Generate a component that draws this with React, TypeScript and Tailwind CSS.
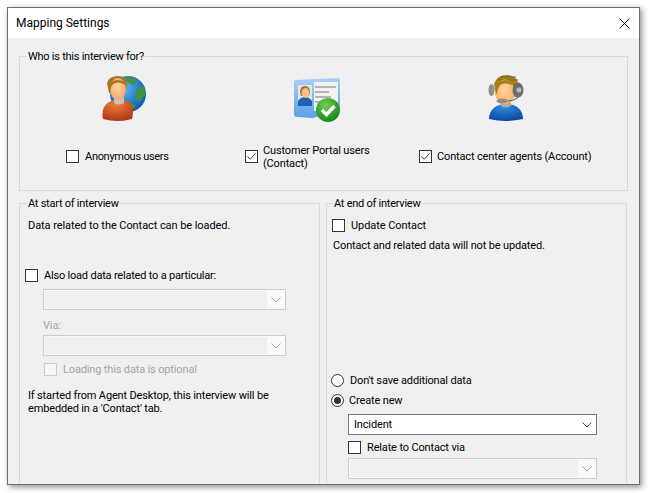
const font = "font-['Roboto','Noto_Sans',sans-serif]";

function CheckBox({ checked, disabled }: { checked?: boolean; disabled?: boolean }) {
  return (
    <span
      className={
        disabled
          ? "flex h-[13px] w-[13px] shrink-0 border border-[#cccccc] bg-[#f7f7f7]"
          : "flex h-[13px] w-[13px] shrink-0 border border-[#333333] bg-white"
      }
    >
      {checked && (
        <svg viewBox="0 0 11 11" className="h-[11px] w-[11px]">
          <path d="M1.5 5.5 L4.2 8.3 L9.6 2.2" fill="none" stroke="#444" strokeWidth="1" />
        </svg>
      )}
    </span>
  );
}

function Radio({ checked }: { checked?: boolean }) {
  return (
    <span className="flex h-[13px] w-[13px] shrink-0 items-center justify-center rounded-full border border-[#333333] bg-white">
      {checked && <span className="h-[7px] w-[7px] rounded-full bg-[#333333]" />}
    </span>
  );
}

function Chevron({ color }: { color: string }) {
  return (
    <svg viewBox="0 0 10 6" className="h-[6px] w-[10px]">
      <path d="M0.5 0.5 L5 5 L9.5 0.5" fill="none" stroke={color} strokeWidth="1" />
    </svg>
  );
}

function DisabledSelect() {
  return (
    <div className="flex h-[21px] border border-[#cccccc] bg-[#f9f9f9] py-[1px] pl-[1px]">
      <div className="flex-1 bg-[#f0f0f0]" />
      <div className="flex w-[18px] items-center justify-center">
        <Chevron color="#a6a6a6" />
      </div>
    </div>
  );
}

function GroupBox({
  title,
  className,
  legendLeft = "left-[7px]",
  children,
}: {
  title: string;
  className: string;
  legendLeft?: string;
  children: React.ReactNode;
}) {
  return (
    <div className={"relative border border-[#d9d9d9] " + className}>
      <span className={"absolute top-[-8px] bg-[#f0f0f0] px-[1px] leading-[16px] tracking-[-0.25px] " + legendLeft}>{title}</span>
      {children}
    </div>
  );
}

function PersonGlobe() {
  return (
    <svg viewBox="0 0 46 46" className="h-[46px] w-[46px]">
      <defs>
        <radialGradient id="globe" cx="0.4" cy="0.35" r="0.75">
          <stop offset="0" stopColor="#5fb2ea" />
          <stop offset="0.7" stopColor="#1a6fc4" />
          <stop offset="1" stopColor="#0f4f98" />
        </radialGradient>
        <radialGradient id="shirt" cx="0.45" cy="0.2" r="0.9">
          <stop offset="0" stopColor="#ea7f3a" />
          <stop offset="1" stopColor="#a92d12" />
        </radialGradient>
        <radialGradient id="face" cx="0.45" cy="0.4" r="0.7">
          <stop offset="0" stopColor="#ffd3a1" />
          <stop offset="1" stopColor="#f6a05c" />
        </radialGradient>
      </defs>
      <circle cx="27" cy="19" r="18" fill="url(#globe)" />
      <path d="M24 2 Q32 1 36 6 L33 10 L26 7 Z M36 14 L43 11 L44 20 L38 27 L34 22 Z M30 28 L35 30 L31 35 Z" fill="#3f9440" />
      <path d="M2 44 C-1 30 9 25 16 25 H22 C30 25 34 31 31 44 Q17 48 2 44 Z" fill="url(#shirt)" />
      <path d="M13 22 H23 V28 Q18 31 13 28 Z" fill="#c9c1b8" />
      <path d="M6 8 Q8 1 17 1 Q26 1 26 10 L25 16 L8 18 Z" fill="#a9761f" />
      <ellipse cx="17" cy="14" rx="8" ry="11" fill="url(#face)" />
      <path d="M8 12 Q9 5 17 5 Q24 5 26 11 Q20 6 14 8 Q10 9 9 17 Z" fill="#a9761f" />
    </svg>
  );
}

function ContactCard() {
  return (
    <svg viewBox="0 0 48 46" className="h-[46px] w-[48px]">
      <defs>
        <linearGradient id="card" x1="0" y1="0" x2="0" y2="1">
          <stop offset="0" stopColor="#a8d0f5" />
          <stop offset="1" stopColor="#5a9fe6" />
        </linearGradient>
        <radialGradient id="tick" cx="0.4" cy="0.3" r="0.8">
          <stop offset="0" stopColor="#6fd04a" />
          <stop offset="1" stopColor="#0b7c1a" />
        </radialGradient>
      </defs>
      <path d="M3 3 L45 1 Q47 1 47 3 V33 L20 41 L4 40 Q1 40 1 37 V5 Q1 3 3 3 Z" fill="url(#card)" />
      <rect x="21" y="5" width="24" height="29" fill="#f2f2f2" />
      <rect x="5" y="8" width="14" height="21" fill="#dfe6ee" />
      <path d="M5 29 V24 Q8 20 12 20 Q16 20 19 24 V29 Z" fill="#1f5fb5" />
      <path d="M7 15 Q7 9 12 9 Q17 9 17 15 L16 19 H8 Z" fill="#a9761f" />
      <ellipse cx="12.5" cy="16" rx="3.8" ry="5" fill="#f9c08a" />
      <path d="M22 10 H43 M22 15 H36 M22 20 H38 M22 25 H30" stroke="#b4b4b4" strokeWidth="2" />
      <circle cx="35" cy="33" r="12" fill="url(#tick)" />
      <path d="M29 33 L33.5 37.5 L41.5 29" fill="none" stroke="#ffffff" strokeWidth="3.4" />
    </svg>
  );
}

function Agent() {
  return (
    <svg viewBox="0 0 36 46" className="h-[46px] w-[36px]">
      <defs>
        <radialGradient id="blue" cx="0.45" cy="0.15" r="0.95">
          <stop offset="0" stopColor="#2f8fe0" />
          <stop offset="1" stopColor="#0a3f9e" />
        </radialGradient>
        <radialGradient id="skin" cx="0.45" cy="0.4" r="0.7">
          <stop offset="0" stopColor="#ffd3a1" />
          <stop offset="1" stopColor="#f6a860" />
        </radialGradient>
      </defs>
      <path d="M1 44 C1 34 9 29 18 29 C27 29 35 34 35 44 Q18 48 1 44 Z" fill="url(#blue)" />
      <path d="M13 27 H23 V31 Q18 34 13 31 Z" fill="#b0a898" />
      <path d="M6 9 Q9 0 19 0 Q29 0 31 11 L29 22 H8 Z" fill="#a9801c" />
      <path d="M12 2 H28 M9 5 H30" stroke="#75622f" strokeWidth="1.2" />
      <ellipse cx="17" cy="17" rx="10" ry="12.5" fill="url(#skin)" />
      <path d="M7 15 Q8 5 17 5 Q25 5 28 12 Q20 7 14 9 Q10 10 9 20 Z" fill="#a9801c" />
      <ellipse cx="3.5" cy="15" rx="3" ry="6" fill="#8f8f8f" />
      <ellipse cx="30" cy="15" rx="5.5" ry="7.5" fill="#6d6d6d" />
      <circle cx="31" cy="15" r="2.5" fill="#b8b8b8" />
      <path d="M30 22 Q27 26 18 26" fill="none" stroke="#666" strokeWidth="1.2" />
      <ellipse cx="14" cy="26" rx="5.5" ry="2.4" fill="#8c8c8c" />
    </svg>
  );
}

export default function App() {
  return (
    <div className={"h-[493px] w-[651px] overflow-hidden bg-white pl-[7px] pt-[7px] text-[11px] leading-[13px] tracking-[-0.15px] text-black " + font}>
      <div className="flex h-[478px] w-[633px] flex-col overflow-hidden border border-[#6e6e6e] bg-[#f0f0f0] shadow-[2px_2px_6px_rgba(0,0,0,0.45)]">
        <div className="flex h-[30px] shrink-0 items-center justify-between bg-white pl-[8px] pr-[9px]">
          <span className="text-[12px] tracking-normal">Mapping Settings</span>
          <svg viewBox="0 0 11 11" className="h-[11px] w-[11px]">
            <path d="M0.5 0.5 L10.5 10.5 M10.5 0.5 L0.5 10.5" stroke="#111" strokeWidth="1" />
          </svg>
        </div>

        <div className="flex flex-col gap-[12px] pl-[11px] pt-[18px]">
          <GroupBox title="Who is this interview for?" className="h-[135px] w-[609px]">
            <div className="flex pl-[46px] pt-[18px]">
              <div className="flex w-[179px] flex-col">
                <div className="ml-[35px] h-[46px]"><PersonGlobe /></div>
                <div className="mt-[29px] flex h-[13px] items-center gap-[6px]">
                  <CheckBox />
                  <span className="tracking-[-0.3px]">Anonymous users</span>
                </div>
              </div>
              <div className="flex w-[174px] flex-col">
                <div className="ml-[48px] mt-[2px] h-[44px]"><ContactCard /></div>
                <div className="mt-[29px] flex h-[13px] items-center gap-[5px]">
                  <CheckBox checked />
                  <span className="w-[125px]">
                    Customer Portal users
                    <br />
                    (Contact)
                  </span>
                </div>
              </div>
              <div className="flex flex-col">
                <div className="ml-[69px] h-[46px]"><Agent /></div>
                <div className="mt-[29px] flex h-[13px] items-center gap-[5px]">
                  <CheckBox checked />
                  <span>Contact center agents (Account)</span>
                </div>
              </div>
            </div>
          </GroupBox>

          <div className="flex gap-[6px]">
            <GroupBox title="At start of interview" className="h-[300px] w-[301px]">
              <div className="flex flex-col pl-[8px] pt-[15px]">
                <p className="tracking-[-0.07px]">Data related to the Contact can be loaded.</p>
                <div className="-ml-[3px] mt-[37px] flex items-center gap-[6px]">
                  <CheckBox />
                  <span className="tracking-[-0.2px]">Also load data related to a particular:</span>
                </div>
                <div className="ml-[15px] mt-[7px] w-[243px]">
                  <DisabledSelect />
                </div>
                <span className="ml-[15px] mt-[9px] text-[#a3a3a3]">Via:</span>
                <div className="ml-[15px] mt-[3px] w-[243px]">
                  <DisabledSelect />
                </div>
                <div className="ml-[16px] mt-[7px] flex items-center gap-[6px] text-[#a3a3a3]">
                  <CheckBox disabled />
                  <span>Loading this data is optional</span>
                </div>
                <p className="mt-[13px] w-[270px]">
                  If started from Agent Desktop, this interview will be
                  <br />
                  embedded in a 'Contact' tab.
                </p>
              </div>
            </GroupBox>

            <GroupBox title="At end of interview" className="h-[300px] w-[301px]" legendLeft="left-[6px]">
              <div className="flex flex-col pl-[5px] pt-[15px]">
                <div className="flex items-center gap-[6px]">
                  <CheckBox />
                  <span className="tracking-[-0.07px]">Update Contact</span>
                </div>
                <p className="mt-[7px] pl-[1px]">Contact and related data will not be updated.</p>
                <div className="-ml-[1px] mt-[122px] flex items-center gap-[6px]">
                  <Radio />
                  <span>Don't save additional data</span>
                </div>
                <div className="-ml-[1px] mt-[7px] flex items-center gap-[5px]">
                  <Radio checked />
                  <span>Create new</span>
                </div>
                <div className="ml-[16px] mt-[7px] flex h-[21px] w-[249px] items-center justify-between border border-[#7a7a7a] bg-white pl-[5px] pr-[4px]">
                  <span>Incident</span>
                  <Chevron color="#444444" />
                </div>
                <div className="ml-[16px] mt-[6px] flex items-center gap-[6px]">
                  <CheckBox />
                  <span>Relate to Contact via</span>
                </div>
                <div className="ml-[16px] mt-[4px] w-[249px]">
                  <DisabledSelect />
                </div>
              </div>
            </GroupBox>
          </div>
        </div>
      </div>
    </div>
  );
}
